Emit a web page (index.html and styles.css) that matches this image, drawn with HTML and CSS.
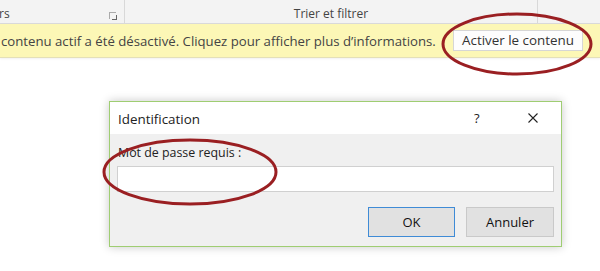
FILE: index.html
```html
<!DOCTYPE html>
<html lang="fr">
<head>
    <meta charset="UTF-8">
    <meta name="viewport" content="width=device-width, initial-scale=1.0">
    <title>Identification</title>
    <link rel="stylesheet" href="styles.css">
</head>
<body>

    <div class="ribbon">
        <div class="group group-left">
            <span class="group-label">rs</span>
            <span class="launcher"></span>
        </div>
        <div class="group group-mid">
            <span class="group-label">Trier et filtrer</span>
        </div>
        <div class="group group-right"></div>
    </div>

    <div class="msgbar">
        <span class="msg">contenu actif a été désactivé. Cliquez pour afficher plus d’informations.</span>
        <button type="button" class="msg-btn">Activer le contenu</button>
    </div>

    <div class="sheet">
        <div class="dialog">
            <div class="dialog-title">
                <span class="title-text">Identification</span>
                <span class="title-help">?</span>
                <span class="title-close">
                    <svg width="10" height="10" viewBox="0 0 10 10">
                        <path d="M0.5 0.5 L9.5 9.5 M9.5 0.5 L0.5 9.5" stroke="#222" stroke-width="1.1" fill="none"/>
                    </svg>
                </span>
            </div>
            <div class="dialog-body">
                <label for="pwd">Mot de passe requis :</label>
                <input type="password" id="pwd">
                <div class="dialog-buttons">
                    <button type="button" class="btn btn-ok">OK</button>
                    <button type="button" class="btn">Annuler</button>
                </div>
            </div>
        </div>
    </div>

    <!-- annotations drawn over the screenshot -->
    <svg class="mark mark-top" width="160" height="70" viewBox="0 0 160 70">
        <ellipse cx="80" cy="35" rx="74" ry="30" fill="none" stroke="#9a1f22" stroke-width="3"/>
    </svg>
    <svg class="mark mark-pwd" width="182" height="72" viewBox="0 0 182 72">
        <ellipse cx="91" cy="36" rx="86" ry="32" fill="none" stroke="#9a1f22" stroke-width="3"/>
    </svg>

</body>
</html>
```

FILE: styles.css
```css
body {
    margin: 0;
    width: 600px;
    height: 271px;
    overflow: hidden;
    position: relative;
    background-color: #fff;
    font-family: "Open Sans", "Noto Sans", sans-serif;
    color: #222;
}

.ribbon {
    display: flex;
    height: 23px;
    background-color: #f3f3f3;
    border-bottom: 1px solid #dadada;
}

.group {
    position: relative;
    height: 23px;
    border-right: 1px solid #d8d8d8;
    font-size: 12px;
    color: #444;
}

.group-left {
    width: 124px;
}

.group-mid {
    width: 412px;
    text-align: center;
}

.group-right {
    flex: 1;
    border-right: none;
}

.group-label {
    display: block;
    line-height: 16px;
    padding-top: 6px;
}

.group-left .group-label {
    margin-left: -1px;
}

.launcher {
    position: absolute;
    left: 109px;
    top: 12px;
    width: 6px;
    height: 6px;
    border-left: 1px solid #aaa;
    border-top: 1px solid #aaa;
}

.launcher::after {
    content: "";
    position: absolute;
    left: 2px;
    top: 2px;
    width: 4px;
    height: 4px;
    border-right: 1px solid #666;
    border-bottom: 1px solid #666;
}

.msgbar {
    display: flex;
    align-items: center;
    height: 33px;
    padding-left: 1px;
    background-color: #fcf7b6;
    border-bottom: 1px solid #e4e0b8;
    box-shadow: 0 1px 2px rgba(0, 0, 0, 0.06);
    white-space: nowrap;
}

.msg {
    width: 436px;
    font-size: 13.2px;
    color: #444;
}

.msg-btn {
    margin-left: 16px;
    width: 130px;
    height: 21px;
    padding: 0;
    font-family: inherit;
    font-size: 13.4px;
    color: #333;
    background-color: #fdfdfd;
    border: 1px solid #d6d6d6;
    line-height: 19px;
    white-space: nowrap;
}

.sheet {
    padding: 43px 0 0 109px;
}

.dialog {
    width: 451px;
    border: 1px solid #9fcd72;
    background-color: #f0f0f0;
    box-shadow: 0 0 9px rgba(0, 0, 0, 0.22);
}

.dialog-title {
    display: flex;
    align-items: center;
    height: 32px;
    background-color: #fff;
    font-size: 13.4px;
}

.title-text {
    flex: 1;
    padding-left: 8px;
    padding-top: 2px;
}

.title-help {
    width: 10px;
    margin-right: 44px;
    font-size: 13px;
}

.title-close {
    display: flex;
    margin-right: 23px;
}

.dialog-body {
    padding: 9px 7px 9px 7px;
}

label {
    display: block;
    font-size: 12.4px;
    line-height: 20px;
    margin-left: 1px;
}

input {
    display: block;
    box-sizing: border-box;
    width: 437px;
    height: 26px;
    margin: 3px 0 0 0;
    border: 1px solid #d0d0d0;
    background-color: #fff;
    outline: none;
}

.dialog-buttons {
    display: flex;
    justify-content: flex-end;
    gap: 11px;
    margin-top: 15px;
}

.btn {
    width: 88px;
    height: 30px;
    padding: 0;
    font-family: inherit;
    font-size: 13px;
    color: #111;
    background-color: #e1e1e1;
    border: 1px solid #c9c9c9;
}

.btn-ok {
    width: 87px;
    border-color: #3f8bd6;
}

.mark {
    position: absolute;
}

.mark-top {
    left: 437px;
    top: 9px;
}

.mark-pwd {
    left: 99px;
    top: 136px;
}
```
